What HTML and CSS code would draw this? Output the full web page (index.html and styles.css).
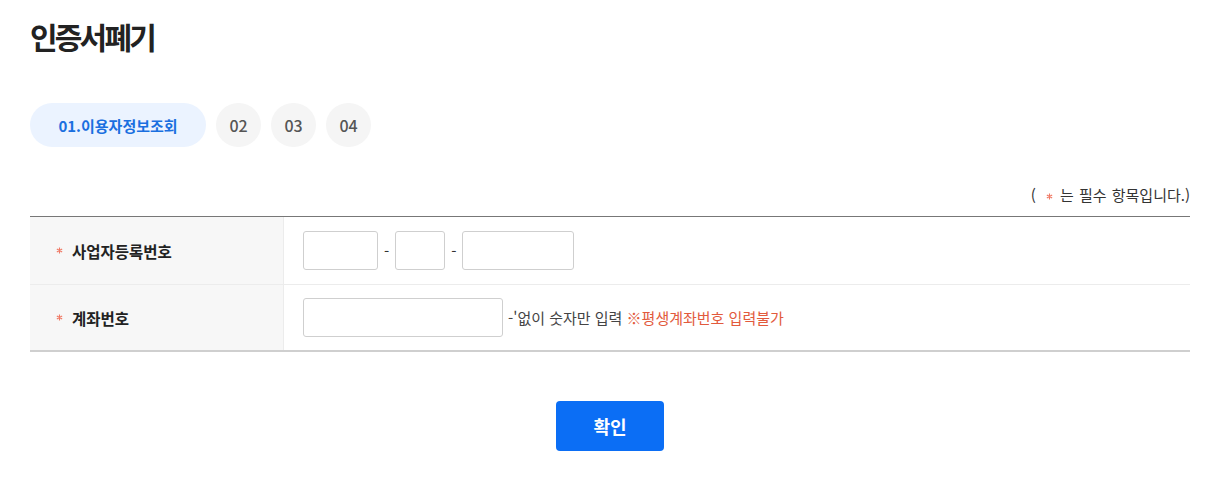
FILE: index.html
```html
<!DOCTYPE html>
<html lang="ko">
<head>
<meta charset="utf-8">
<link rel="stylesheet" href="styles.css">
</head>
<body>
<div class="page">
  <h1 class="title">인증서폐기</h1>
  <ol class="steps">
    <li class="step step-active">01.이용자정보조회</li>
    <li class="step">02</li>
    <li class="step">03</li>
    <li class="step">04</li>
  </ol>
  <p class="req-note">(<svg class="star" viewBox="0 0 8 8" aria-label="*"><path d="M4 0.5V7.5M0.97 2.25L7.03 5.75M0.97 5.75L7.03 2.25"/></svg>는 필수 항목입니다.)</p>
  <div class="form-table">
    <div class="row">
      <div class="label"><svg class="star" viewBox="0 0 8 8" aria-label="*"><path d="M4 0.5V7.5M0.97 2.25L7.03 5.75M0.97 5.75L7.03 2.25"/></svg>사업자등록번호</div>
      <div class="field">
        <input class="inp w75" type="text"><span class="dash">-</span><input class="inp w50" type="text"><span class="dash">-</span><input class="inp w112" type="text">
      </div>
    </div>
    <div class="row">
      <div class="label"><svg class="star" viewBox="0 0 8 8" aria-label="*"><path d="M4 0.5V7.5M0.97 2.25L7.03 5.75M0.97 5.75L7.03 2.25"/></svg>계좌번호</div>
      <div class="field">
        <input class="inp w200" type="text"><span class="hint">-'없이 숫자만 입력 <span class="warn">※평생계좌번호 입력불가</span></span>
      </div>
    </div>
  </div>
  <div class="actions">
    <button class="btn-confirm" type="button">확인</button>
  </div>
</div>
</body>
</html>
```

FILE: styles.css
```css
* { box-sizing: border-box; }
html, body { margin: 0; padding: 0; background: #fff; }
body {
  font-family: "Noto Sans CJK KR", "Noto Sans", sans-serif;
  color: #222;
}
.page { padding: 0 27px 0 30px; }
.title {
  margin: 0;
  padding-top: 14px;
  font-size: 30px;
  line-height: 44px;
  font-weight: 700;
  letter-spacing: -2.8px;
  color: #222;
}
.steps {
  list-style: none;
  margin: 45px 0 0;
  padding: 0;
  display: flex;
  gap: 10px;
}
.step {
  width: 45px;
  height: 44px;
  border-radius: 22px;
  background: #f5f5f5;
  color: #555;
  font-size: 16px;
  font-weight: 500;
  display: flex;
  align-items: center;
  justify-content: center;
}
.step-active {
  width: 176px;
  background: #ebf3ff;
  color: #1a6fe0;
  font-size: 15px;
  font-weight: 700;
}
.req-note {
  margin: 38px 0 0;
  text-align: right;
  font-size: 15px;
  line-height: 20px;
  color: #333;
  word-spacing: 1px;
}
.req-note .star { margin: 0 7px 0 10px; }
.star {
  width: 7px;
  height: 7px;
  flex: none;
  display: inline-block;
  vertical-align: 1px;
  stroke: #f07a66;
  stroke-width: 1.3;
  fill: none;
}
.form-table {
  margin-top: 11px;
  border-top: 1px solid #777;
  border-bottom: 2px solid #cfcfcf;
}
.row {
  display: flex;
  height: 67px;
}
.row + .row { border-top: 1px solid #ececec; height: 66px; }
.label {
  width: 254px;
  flex: none;
  background: #f7f7f7;
  border-right: 1px solid #ececec;
  padding-left: 26px;
  display: flex;
  align-items: center;
  font-size: 15.5px;
  font-weight: 700;
  color: #222;
}
.label .star { margin-right: 9px; }
.field {
  flex: 1;
  display: flex;
  align-items: center;
  padding-left: 19px;
}
.inp {
  height: 39px;
  border: 1px solid #cfcfcf;
  border-radius: 3px;
  background: #fff;
  padding: 0 8px;
  font: inherit;
  outline: none;
}
.w75 { width: 75px; }
.w50 { width: 50px; }
.w112 { width: 112px; }
.w200 { width: 200px; }
.dash {
  margin: 0 6px;
  font-size: 15px;
  color: #333;
}
.hint {
  margin-left: 5px;
  font-size: 15px;
  color: #444;
}
.warn { color: #e25a3c; }
.actions {
  display: flex;
  justify-content: center;
  margin-top: 49px;
}
.btn-confirm {
  width: 108px;
  height: 50px;
  border: 0;
  border-radius: 4px;
  background: #0b6ef5;
  color: #fff;
  font-family: inherit;
  font-size: 18px;
  font-weight: 700;
  cursor: pointer;
}
```
